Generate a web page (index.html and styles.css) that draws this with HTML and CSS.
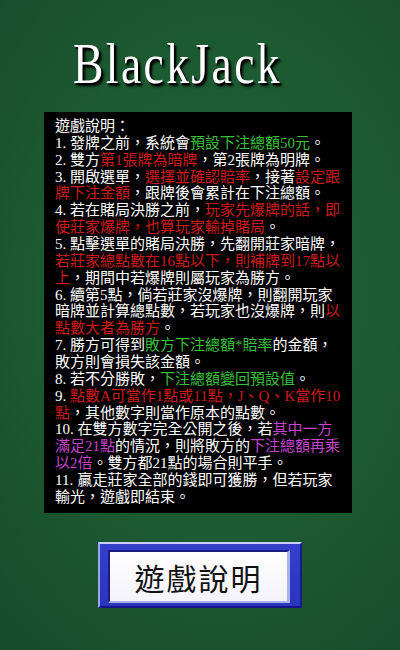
FILE: index.html
```html
<!DOCTYPE html>
<html lang="zh-Hant">
<head>
<meta charset="utf-8">
<title>BlackJack</title>
<link rel="stylesheet" href="styles.css">
</head>
<body>
<div class="page">
  <header class="header">
    <h1 class="title">BlackJack</h1>
  </header>
  <section class="rules">
    <div class="line">遊戲說明：</div>
    <div class="line"><span class="n">1.</span>發牌之前，系統會<span class="g">預設下注總額50元</span>。</div>
    <div class="line"><span class="n">2.</span>雙方<span class="r">第1張牌為暗牌</span>，第2張牌為明牌。</div>
    <div class="line"><span class="n">3.</span>開啟選單，<span class="r">選擇並確認賠率</span>，接著<span class="r">設定跟</span></div>
    <div class="line"><span class="r">牌下注金額</span>，跟牌後會累計在下注總額。</div>
    <div class="line"><span class="n">4.</span>若在賭局決勝之前，<span class="r">玩家先爆牌的話，即</span></div>
    <div class="line"><span class="r">使莊家爆牌，也算玩家輸掉賭局</span>。</div>
    <div class="line"><span class="n">5.</span>點擊選單的賭局決勝，先翻開莊家暗牌，</div>
    <div class="line"><span class="r">若莊家總點數在16點以下，則補牌到17點以</span></div>
    <div class="line"><span class="r">上</span>，期間中若爆牌則屬玩家為勝方。</div>
    <div class="line"><span class="n">6.</span>續第5點，倘若莊家沒爆牌，則翻開玩家</div>
    <div class="line">暗牌並計算總點數，若玩家也沒爆牌，則<span class="r">以</span></div>
    <div class="line"><span class="r">點數大者為勝方</span>。</div>
    <div class="line"><span class="n">7.</span>勝方可得到<span class="g">敗方下注總額*賠率</span>的金額，</div>
    <div class="line">敗方則會損失該金額。</div>
    <div class="line"><span class="n">8.</span>若不分勝敗，<span class="g">下注總額變回預設值</span>。</div>
    <div class="line"><span class="n">9.</span><span class="r">點數A可當作1點或11點，J、Q、K當作10</span></div>
    <div class="line"><span class="r">點</span>，其他數字則當作原本的點數。</div>
    <div class="line"><span class="n n2">10.</span>在雙方數字完全公開之後，若<span class="p">其中一方</span></div>
    <div class="line"><span class="p">滿足21點</span>的情況，則將敗方的<span class="p">下注總額再乘</span></div>
    <div class="line"><span class="p">以2倍</span>。雙方都21點的場合則平手。</div>
    <div class="line"><span class="n n2">11.</span>贏走莊家全部的錢即可獲勝，但若玩家</div>
    <div class="line">輸光，遊戲即結束。</div>
  </section>
  <div class="btn">
    <div class="btn-inner">遊戲說明</div>
  </div>
</div>
</body>
</html>
```

FILE: styles.css
```css
html, body {
  margin: 0;
  padding: 0;
}
body {
  width: 400px;
  height: 650px;
  overflow: hidden;
  background: radial-gradient(ellipse 80% 70% at 55% 45%, #206236 0%, #1c5a31 55%, #174c2b 100%);
  font-family: "Liberation Serif", "Noto Sans CJK TC", serif;
}
.page {
  display: flex;
  flex-direction: column;
  height: 650px;
}
.header {
  padding: 35px 0 0 73px;
  height: 57px;
}
.title {
  margin: 0;
  font-family: "Liberation Serif", serif;
  font-weight: normal;
  font-size: 57px;
  line-height: 57px;
  color: #ffffff;
  display: inline-block;
  transform: scaleX(0.8);
  transform-origin: left center;
  letter-spacing: 3px;
  text-shadow: 3px 3px 3px #000000, 2px 2px 1px #000000;
}
.rules {
  margin: 20px 0 0 44px;
  width: 308px;
  height: 401px;
  box-sizing: border-box;
  background: #000000;
  padding: 6px 0 0 11px;
  color: #ffffff;
  font-size: 15px;
  line-height: 16.86px;
}
.line {
  white-space: nowrap;
}
.n {
  display: inline-block;
  width: 15px;
}
.n2 {
  width: 22.5px;
}
.g {
  color: #38c038;
}
.r {
  color: #d01a1a;
}
.p {
  color: #c444cc;
}
.btn {
  margin: 29px auto 0;
  width: 204px;
  height: 66px;
  box-sizing: border-box;
  background: linear-gradient(#3440cc, #2a34bc);
  border-top: 2px solid #c8d0ff;
  border-left: 2px solid #9aa4f0;
  border-right: 2px solid #1a1a90;
  border-bottom: 2px solid #14148a;
  padding: 6px 10px 3px 8px;
}
.btn-inner {
  height: 100%;
  box-sizing: border-box;
  background: linear-gradient(#ffffff, #f3f3fa);
  border-top: 2px solid #1c1c80;
  border-left: 2px solid #1c1c80;
  border-right: 3px solid #a8b0f0;
  border-bottom: 2px solid #a8b0f0;
  display: flex;
  align-items: center;
  justify-content: center;
  font-family: "Noto Sans CJK TC", sans-serif;
  font-size: 30px;
  letter-spacing: 2px;
  color: #111111;
}
```
